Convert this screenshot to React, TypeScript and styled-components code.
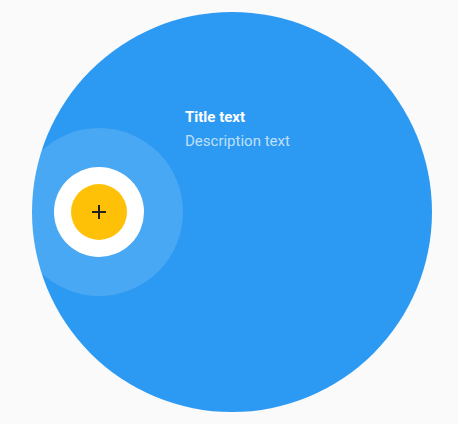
import styled, { createGlobalStyle } from "styled-components";

const Global = createGlobalStyle`
  html, body {
    margin: 0;
    padding: 0;
    background: #fafafa;
    font-family: Roboto, "Noto Sans", sans-serif;
  }
`;

const Stage = styled.div`
  position: relative;
  width: 458px;
  height: 424px;
  overflow: hidden;
  background: #fafafa;
`;

// big blue backdrop circle of the discovery prompt
const Backdrop = styled.div`
  position: absolute;
  left: 32px;
  top: 12px;
  width: 400px;
  height: 400px;
  border-radius: 50%;
  background: #2c9af2;
`;

const Copy = styled.div`
  position: absolute;
  left: 185px;
  top: 107px;
  display: flex;
  flex-direction: column;
  gap: 3px;
  color: #fff;
  font-size: 15px;
  line-height: 21px;
`;

const Title = styled.div`
  font-weight: 700;
`;

const Description = styled.div`
  color: rgba(255, 255, 255, 0.7);
`;

// pulse ring, white circle and the fab share one centre
const Pulse = styled.div`
  position: absolute;
  left: 15px;
  top: 128px;
  width: 168px;
  height: 168px;
  border-radius: 50%;
  background: rgba(255, 255, 255, 0.14);
  display: flex;
  align-items: center;
  justify-content: center;
`;

const Target = styled.div`
  width: 90px;
  height: 90px;
  border-radius: 50%;
  background: #fff;
  display: flex;
  align-items: center;
  justify-content: center;
`;

const Fab = styled.button`
  width: 56px;
  height: 56px;
  border: 0;
  padding: 0;
  border-radius: 50%;
  background: #ffc107;
  color: #212121;
  display: flex;
  align-items: center;
  justify-content: center;
  cursor: pointer;
`;

export default function App() {
  return (
    <Stage>
      <Global />
      <Backdrop />
      <Copy>
        <Title>Title text</Title>
        <Description>Description text</Description>
      </Copy>
      <Pulse>
        <Target>
          <Fab aria-label="Add">
            <svg width="24" height="24" viewBox="0 0 24 24" aria-hidden>
              <path d="M19 13h-6v6h-2v-6H5v-2h6V5h2v6h6v2z" fill="currentColor" />
            </svg>
          </Fab>
        </Target>
      </Pulse>
    </Stage>
  );
}
